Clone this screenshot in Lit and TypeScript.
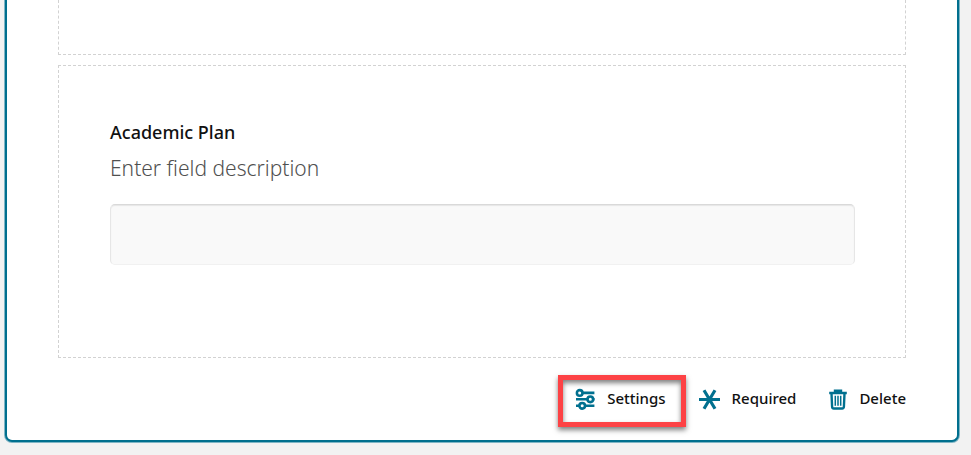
import { LitElement, html, css, svg } from "lit";
import { customElement, property } from "lit/decorators.js";

const icons = {
  settings: svg`<g fill="none" stroke="currentColor" stroke-width="2.6">
    <path d="M7.6 3.9H19.4M1 10.3H12M17.8 10.3H19.6M1 16.8H4M10.2 16.8H19.4"/>
    <circle cx="4.7" cy="3.9" r="2.8"/><circle cx="15.3" cy="10.3" r="2.8"/><circle cx="7.2" cy="16.8" r="2.8"/></g>`,
  required: svg`<path fill="none" stroke="currentColor" stroke-width="3.2" d="M0 10.5H21M5 1.3L16 19.7M16 1.3L5 19.7"/>`,
  delete: svg`<g fill="none" stroke="currentColor">
    <path stroke-width="2.4" d="M0.2 4H17.8M6 3.6V1.6H12V3.6M2.5 4.5L3.1 17.8Q3.2 19.5 4.8 19.5H13.2Q14.8 19.5 14.9 17.8L15.5 4.5"/>
    <path stroke-width="1.5" d="M6.3 6.8V16.8M9 6.8V16.8M11.7 6.8V16.8"/></g>`,
};

@customElement("field-action")
class FieldAction extends LitElement {
  @property() icon: keyof typeof icons = "settings";
  @property() label = "";
  @property({ type: Boolean }) marked = false;

  static styles = css`
    :host {
      display: block;
      position: relative;
    }
    .action {
      display: flex;
      align-items: flex-start;
      gap: 12px;
      padding: 0;
      border: 0;
      background: none;
      color: #111;
      font: 500 15px/22px "Noto Sans", sans-serif;
      cursor: pointer;
    }
    .icon {
      flex: none;
      margin-top: 2px;
      color: #00708f;
      overflow: visible;
    }
    .marker {
      position: absolute;
      inset: -12px -20px -17px -17px;
      border: 5px solid #fd4245;
      box-shadow: 0 3px 5px rgba(0, 0, 0, 0.5), inset 0 3px 5px rgba(0, 0, 0, 0.5);
      pointer-events: none;
    }
  `;

  render() {
    const width = { settings: 20, required: 21, delete: 18 }[this.icon];
    return html`<button class="action" type="button">
        <svg class="icon" width=${width} height="21" viewBox="0 0 ${width} 21" aria-hidden="true">${icons[this.icon]}</svg>
        ${this.label}
      </button>
      ${this.marked ? html`<span class="marker"></span>` : null}`;
  }
}

@customElement("app-root")
class AppRoot extends LitElement {
  static styles = css`
    :host {
      display: block;
      min-height: 100vh;
      box-sizing: border-box;
      padding: 0 12px 13px 5px;
      background: #f2f2f2;
      font-family: "Noto Sans", sans-serif;
    }
    .card {
      padding: 0 51px 30px;
      border: solid #006f8e;
      border-width: 0 2px 2px;
      border-radius: 0 0 7px 7px;
      box-shadow: 0 0 0 1px #7fb5c5;
      background: #fff;
    }
    .field {
      border: 1px dashed #d2d2d2;
    }
    .previous {
      height: 54px;
      border-top: 0;
      margin-bottom: 10px;
    }
    .current {
      padding: 52px 50px 92px 51px;
    }
    .title {
      display: block;
      color: #111;
      font-size: 18px;
      font-weight: 500;
      line-height: 28px;
    }
    .description {
      margin: 4px 0 18px;
      color: #505050;
      font-size: 21px;
      font-weight: 300;
      line-height: 36px;
    }
    .answer {
      display: block;
      box-sizing: border-box;
      width: 100%;
      height: 61px;
      padding: 0 16px;
      border: 1px solid #e6e6e6;
      border-top-color: #d9d9d9;
      border-bottom-color: #f1f1f1;
      border-radius: 5px;
      background: #f9f9f9;
      box-shadow: inset 0 1px 1px #e6e6e6;
      font: inherit;
    }
    .actions {
      display: flex;
      justify-content: flex-end;
      gap: 33px;
      margin-top: 29px;
    }
  `;

  render() {
    return html`<main class="card">
      <div class="field previous"></div>
      <section class="field current">
        <label class="title" for="answer">Academic Plan</label>
        <p class="description" id="description">Enter field description</p>
        <input class="answer" id="answer" type="text" aria-describedby="description" />
      </section>
      <div class="actions">
        <field-action icon="settings" label="Settings" marked></field-action>
        <field-action icon="required" label="Required"></field-action>
        <field-action icon="delete" label="Delete"></field-action>
      </div>
    </main>`;
  }
}
